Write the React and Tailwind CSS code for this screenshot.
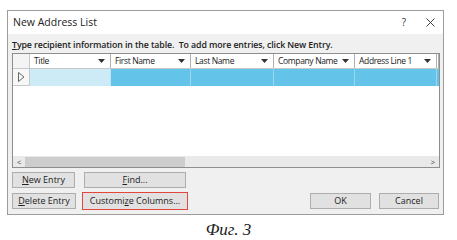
import React from "react";

const columns = [
  { name: "Title", w: "w-[81px]" },
  { name: "First Name", w: "w-[80px]" },
  { name: "Last Name", w: "w-[83px]" },
  { name: "Company Name", w: "w-[81px]" },
  { name: "Address Line 1", w: "w-[82px]" },
];

const Arrow = () => (
  <svg width="7" height="4" viewBox="0 0 7 4" className="shrink-0">
    <path d="M0 0 L7 0 L3.5 4 Z" fill="#333" />
  </svg>
);

const Btn = ({ children, className = "" }) => (
  <div
    className={`flex items-center justify-center h-[16px] bg-[#e1e1e1] border border-[#adadad] text-[9px] text-[#222] ${className}`}
  >
    {children}
  </div>
);

const App = () => {
  return (
    <div
      className="w-[457px] h-[240px] bg-white relative"
      style={{ fontFamily: '"Open Sans", "Noto Sans", sans-serif' }}
    >
      <div className="pt-[10px] pl-[7px]">
        <div className="w-[437px] h-[205px] border border-[#9c9c9c] flex flex-col">
          {/* title bar */}
          <div className="h-[23px] bg-white flex items-center pl-[5px] pr-[8px]">
            <span className="text-[10.5px] text-[#222]">New Address List</span>
            <span className="ml-auto text-[10px] text-[#333]">?</span>
            <svg width="9" height="9" viewBox="0 0 9 9" className="ml-[20px]">
              <path d="M0.5 0.5 L8.5 8.5 M8.5 0.5 L0.5 8.5" stroke="#444" strokeWidth="1" />
            </svg>
          </div>
          {/* body */}
          <div className="flex-1 bg-[#f0f0f0] pl-[4px] flex flex-col">
            <div className="h-[19px] pt-[6px] text-[8.8px] leading-[10px] font-semibold text-[#222] tracking-[-0.1px] whitespace-nowrap">
              <span className="underline">T</span>ype recipient information in
              the table.&nbsp; To add more entries, click New Entry.
            </div>
            {/* table */}
            <div className="w-[428px] h-[115px] border border-[#8e8e8e] bg-white flex flex-col">
              <div className="flex h-[15px] border-b border-[#c8c8c8]">
                <div className="w-[17px] border-r border-[#c8c8c8] bg-[#f4f4f4]" />
                {columns.map((c) => (
                  <div
                    key={c.name}
                    className={`${c.w} border-r border-[#b0b0b0] flex items-center pl-[4px] pr-[5px] text-[8.5px] text-[#222] tracking-[-0.35px] whitespace-nowrap`}
                  >
                    <span>{c.name}</span>
                    <span className="ml-auto pl-[2px]">
                      <Arrow />
                    </span>
                  </div>
                ))}
                <div className="flex-1 border-r border-[#b0b0b0]" />
              </div>
              <div className="flex h-[17px]">
                <div className="w-[17px] border-r border-b border-[#c8c8c8] bg-[#f7f7f7] flex items-center justify-center">
                  <svg width="7" height="10" viewBox="0 0 7 10">
                    <path d="M0.5 0.5 L6 5 L0.5 9.5 Z" fill="none" stroke="#666" strokeWidth="1" />
                  </svg>
                </div>
                <div className="w-[81px] bg-[#cdeaf7] border-r border-[#bfe3f3]" />
                <div className="w-[80px] bg-[#63c3e9] border-r border-[#9ad6ef]" />
                <div className="w-[83px] bg-[#63c3e9] border-r border-[#9ad6ef]" />
                <div className="w-[81px] bg-[#63c3e9] border-r border-[#9ad6ef]" />
                <div className="w-[82px] bg-[#63c3e9] border-r border-[#9ad6ef]" />
                <div className="flex-1 bg-[#63c3e9]" />
              </div>
              <div className="flex-1" />
              {/* horizontal scrollbar */}
              <div className="h-[11px] bg-[#e9e9e9] flex items-center text-[8px] text-[#444]">
                <span className="w-[12px] text-center leading-none">&lt;</span>
                <div className="w-[160px] h-[10px] bg-[#cdcdcd]" />
                <span className="ml-auto w-[12px] text-center leading-none">&gt;</span>
              </div>
            </div>
            {/* buttons */}
            <div className="flex mt-[4px]">
              <Btn className="w-[63px]">
                <span>
                  <span className="underline">N</span>ew Entry
                </span>
              </Btn>
              <Btn className="w-[102px] ml-[9px]">
                <span>
                  <span className="underline">F</span>ind...
                </span>
              </Btn>
            </div>
            <div className="flex mt-[4px] items-center">
              <Btn className="w-[64px]">
                <span>
                  <span className="underline">D</span>elete Entry
                </span>
              </Btn>
              <div className="ml-[6px] w-[106px] h-[18px] border-[1.5px] border-[#e2473c] flex items-center justify-center bg-[#e1e1e1] text-[9px] text-[#222]">
                Customi<span className="underline">z</span>e Columns...
              </div>
              <Btn className="w-[61px] ml-auto">OK</Btn>
              <Btn className="w-[60px] ml-[8px] mr-[4px]">Cancel</Btn>
            </div>
          </div>
        </div>
      </div>
      <div
        className="text-center italic text-[17px] leading-none mt-[6px] text-[#222]"
        style={{ fontFamily: '"Liberation Serif", serif' }}
      >
        Фиг. 3
      </div>
    </div>
  );
};

export default App;
